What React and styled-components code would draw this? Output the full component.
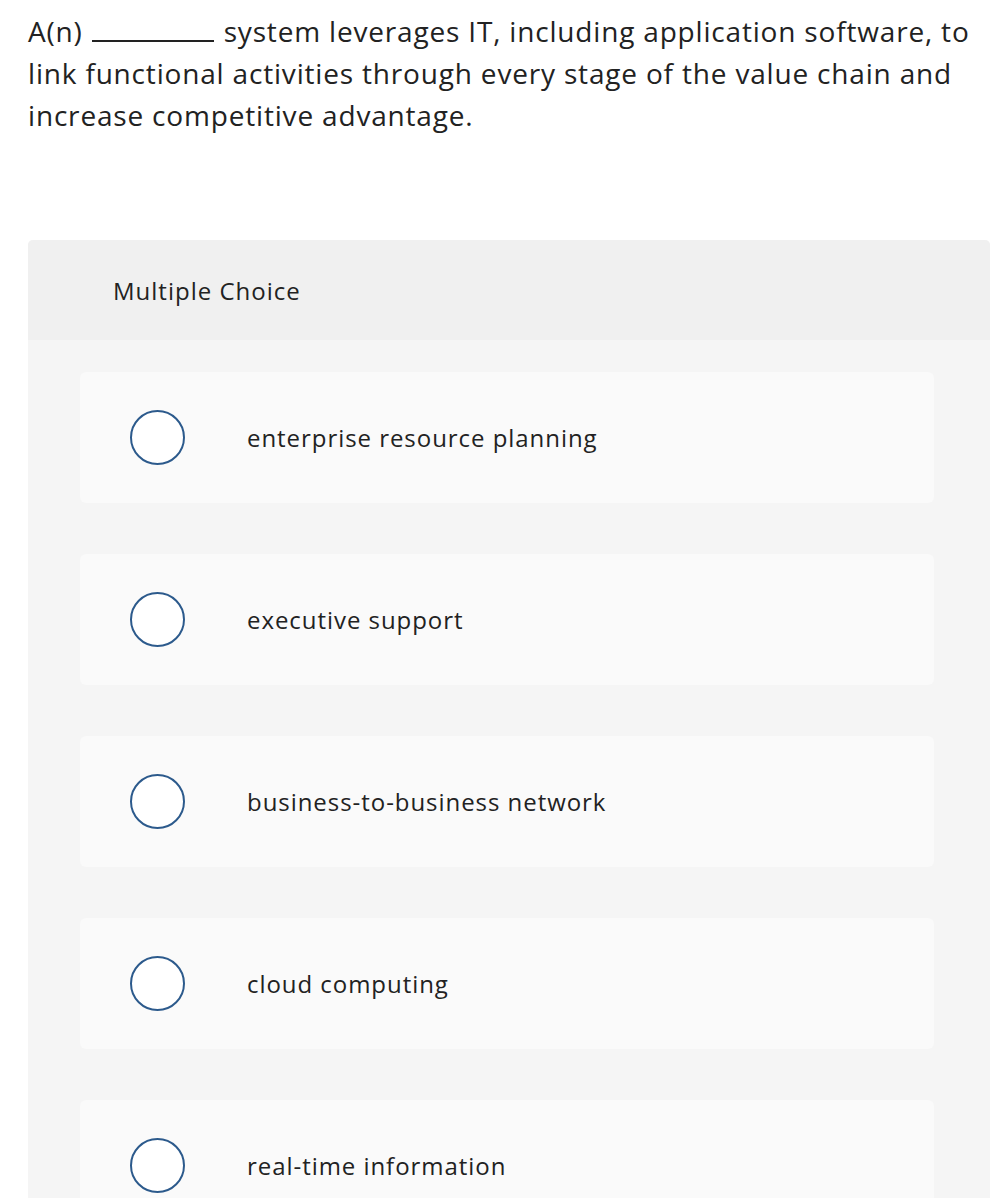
import React from "react";
import styled, { createGlobalStyle } from "styled-components";

const Global = createGlobalStyle`
  html, body { margin: 0; padding: 0; background: #ffffff; }
  body { font-family: "Open Sans", Lato, sans-serif; color: #222222; }
`;

const Page = styled.div`
  padding: 10px 4px 0 28px;
`;

const Question = styled.p`
  margin: 0;
  font-size: 28px;
  line-height: 42px;
  letter-spacing: 0.82px;
  color: #222222;
`;

const Blank = styled.span`
  display: inline-block;
  width: 122px;
  height: 0;
  border-bottom: 2px solid #222222;
  margin: 0 10px 0 9px;
  vertical-align: baseline;
`;

const Panel = styled.section`
  margin-top: 104px;
  background: #f5f5f5;
  border-radius: 5px 5px 0 0;
  overflow: hidden;
`;

const Header = styled.div`
  height: 100px;
  background: #f0f0f0;
  display: flex;
  align-items: center;
  padding-left: 85px;
  font-size: 24px;
  letter-spacing: 1px;
  color: #222222;
`;

const Options = styled.div`
  display: flex;
  flex-direction: column;
  gap: 51px;
  padding: 32px 56px 0 52px;
`;

const Option = styled.label`
  height: 131px;
  background: #fafafa;
  border-radius: 6px;
  display: flex;
  align-items: center;
  padding-left: 50px;
  gap: 62px;
  cursor: pointer;
`;

const Radio = styled.span`
  box-sizing: border-box;
  width: 55px;
  height: 55px;
  border-radius: 50%;
  border: 2px solid #2c5a8c;
  background: #ffffff;
  flex: none;
`;

const OptionText = styled.span`
  font-size: 24px;
  letter-spacing: 0.95px;
  color: #222222;
`;

const choices = [
  "enterprise resource planning",
  "executive support",
  "business-to-business network",
  "cloud computing",
  "real-time information",
];

export default function App() {
  return (
    <>
      <Global />
      <Page>
        <Question>
          A(n)<Blank />system leverages IT, including application software, to link
          functional activities through every stage of the value chain and increase
          competitive advantage.
        </Question>
        <Panel>
          <Header>Multiple Choice</Header>
          <Options>
            {choices.map((c) => (
              <Option key={c}>
                <Radio />
                <OptionText>{c}</OptionText>
              </Option>
            ))}
          </Options>
        </Panel>
      </Page>
    </>
  );
}
